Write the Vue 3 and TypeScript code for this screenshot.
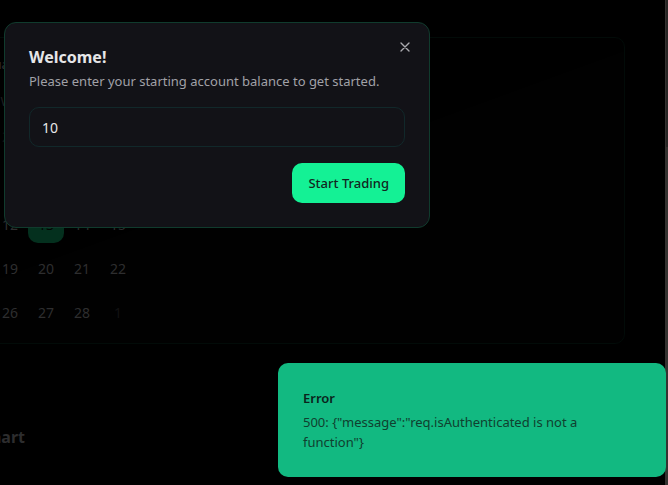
<script setup lang="ts">
import { ref } from 'vue'

interface Day {
  label: number
  outside?: boolean
  selected?: boolean
}

const balance = ref('10')
const dialogOpen = ref(true)
const weekdays = ['Su', 'Mo', 'Tu', 'We', 'Th', 'Fr', 'Sa']

// February 2025, padded with the neighbouring months' days
const first = new Date(2025, 0, 26)
const weeks: Day[][] = Array.from({ length: 5 }, (_, w) =>
  Array.from({ length: 7 }, (_, d) => {
    const date = new Date(first.getFullYear(), first.getMonth(), first.getDate() + w * 7 + d)
    return {
      label: date.getDate(),
      outside: date.getMonth() !== 1,
      selected: date.getMonth() === 1 && date.getDate() === 13,
    }
  }),
)
</script>

<template>
  <div class="screen">
    <main class="page">
      <section class="card">
        <p class="caption">February 2025</p>
        <table class="calendar">
          <thead>
            <tr>
              <th v-for="name in weekdays" :key="name" scope="col">{{ name }}</th>
            </tr>
          </thead>
          <tbody>
            <tr v-for="(week, i) in weeks" :key="i">
              <td v-for="day in week" :key="day.label">
                <button type="button" class="day" :class="{ outside: day.outside, selected: day.selected }">
                  {{ day.label }}
                </button>
              </td>
            </tr>
          </tbody>
        </table>
      </section>
      <section class="chart">
        <h2>Performance Chart</h2>
      </section>
    </main>
    <div class="scrollbar"><div class="thumb"></div></div>

    <form v-if="dialogOpen" class="dialog" role="dialog" aria-labelledby="dialog-title" @submit.prevent>
      <h1 id="dialog-title">Welcome!</h1>
      <label for="balance">Please enter your starting account balance to get started.</label>
      <input id="balance" v-model="balance" type="text" inputmode="decimal" />
      <div class="actions">
        <button type="submit" class="primary">Start Trading</button>
      </div>
      <button type="button" class="close" aria-label="Close" @click="dialogOpen = false">
        <svg viewBox="0 0 24 24" width="16" height="16" fill="none" stroke="currentColor" stroke-width="2" stroke-linecap="round" stroke-linejoin="round">
          <path d="M18 6 6 18M6 6l12 12" />
        </svg>
      </button>
    </form>

    <div class="toast" role="status">
      <strong>Error</strong>
      <p>500: {"message":"req.isAuthenticated is not a function"}</p>
    </div>
  </div>
</template>

<style>
body {
  background: #000;
}
</style>

<style scoped>
* {
  box-sizing: border-box;
}

.screen {
  position: relative;
  display: flex;
  height: 100vh;
  overflow: hidden;
  background: #000;
  color: #2e2e2f;
  font-family: "Segoe UI", "Noto Sans", "Open Sans", sans-serif;
  font-size: 13px;
  line-height: 20px;
}

h1,
h2,
p {
  margin: 0;
}

button,
input {
  font: inherit;
}

.page {
  flex: 1;
  min-width: 0;
  padding: 37px 40px 0 0;
}

.card {
  margin-left: -141px;
  padding: 16px 24px 12px;
  border: 1px solid #020b08;
  border-radius: 10px;
  background: linear-gradient(160deg, #000 50%, #010101 50%);
}

.caption {
  width: 252px;
  font-weight: 500;
  text-align: center;
}

.calendar {
  width: 252px;
  margin-top: 16px;
  border-collapse: collapse;
  table-layout: fixed;
}

th {
  height: 21px;
  padding: 0;
  color: #1f1f20;
  font-size: 13px;
  font-weight: 400;
}

td {
  padding: 8px 0 0;
}

.day {
  display: block;
  width: 100%;
  height: 36px;
  padding: 0;
  border: 0;
  border-radius: 10px;
  background: transparent;
  color: inherit;
  font-size: 14px;
}

.day.outside {
  color: #121213;
}

.day.selected {
  background: #04301e;
  color: #030504;
}

.chart {
  margin-left: -141px;
  padding: 79px 0 0;
}

.chart h2 {
  width: 166px;
  color: #2d2d2e;
  font-size: 16px;
  font-weight: 700;
  line-height: 28px;
  text-align: right;
  white-space: nowrap;
}

.scrollbar {
  width: 3px;
  background: #353331;
}

.thumb {
  width: 2px;
  height: 147px;
  margin-left: auto;
  background: #282625;
}

.dialog {
  position: absolute;
  top: 22px;
  left: 4px;
  display: flex;
  flex-direction: column;
  width: 426px;
  max-width: calc(100% - 8px);
  padding: 24px;
  border: 1px solid #103b2d;
  border-radius: 12px;
  background: #121217;
}

.dialog h1 {
  color: #e6e6e8;
  font-size: 16px;
  font-weight: 700;
  line-height: 20px;
}

.dialog label {
  margin-top: 4px;
  color: #a1a1a7;
}

.dialog input {
  width: 100%;
  height: 40px;
  margin: 16px 0;
  padding: 0 12px;
  border: 1px solid #11282a;
  border-radius: 10px;
  outline: 0;
  background: transparent;
  color: #e6e6e8;
  font-size: 14px;
}

.actions {
  display: flex;
  justify-content: flex-end;
}

.primary {
  height: 40px;
  padding: 0 16px;
  border: 0;
  border-radius: 10px;
  background: #14f195;
  color: #12261f;
  font-weight: 500;
}

.close {
  position: absolute;
  top: 16px;
  right: 16px;
  display: flex;
  padding: 0;
  border: 0;
  background: transparent;
  color: #aaaaae;
}

.toast {
  position: absolute;
  right: 2px;
  bottom: 8px;
  width: 388px;
  max-width: calc(100% - 4px);
  padding: 25px 64px 25px 25px;
  border-radius: 10px;
  background: #12b981;
  color: #10402f;
}

.toast strong {
  display: block;
  margin-bottom: 4px;
  color: #0a241c;
  font-weight: 600;
}
</style>
